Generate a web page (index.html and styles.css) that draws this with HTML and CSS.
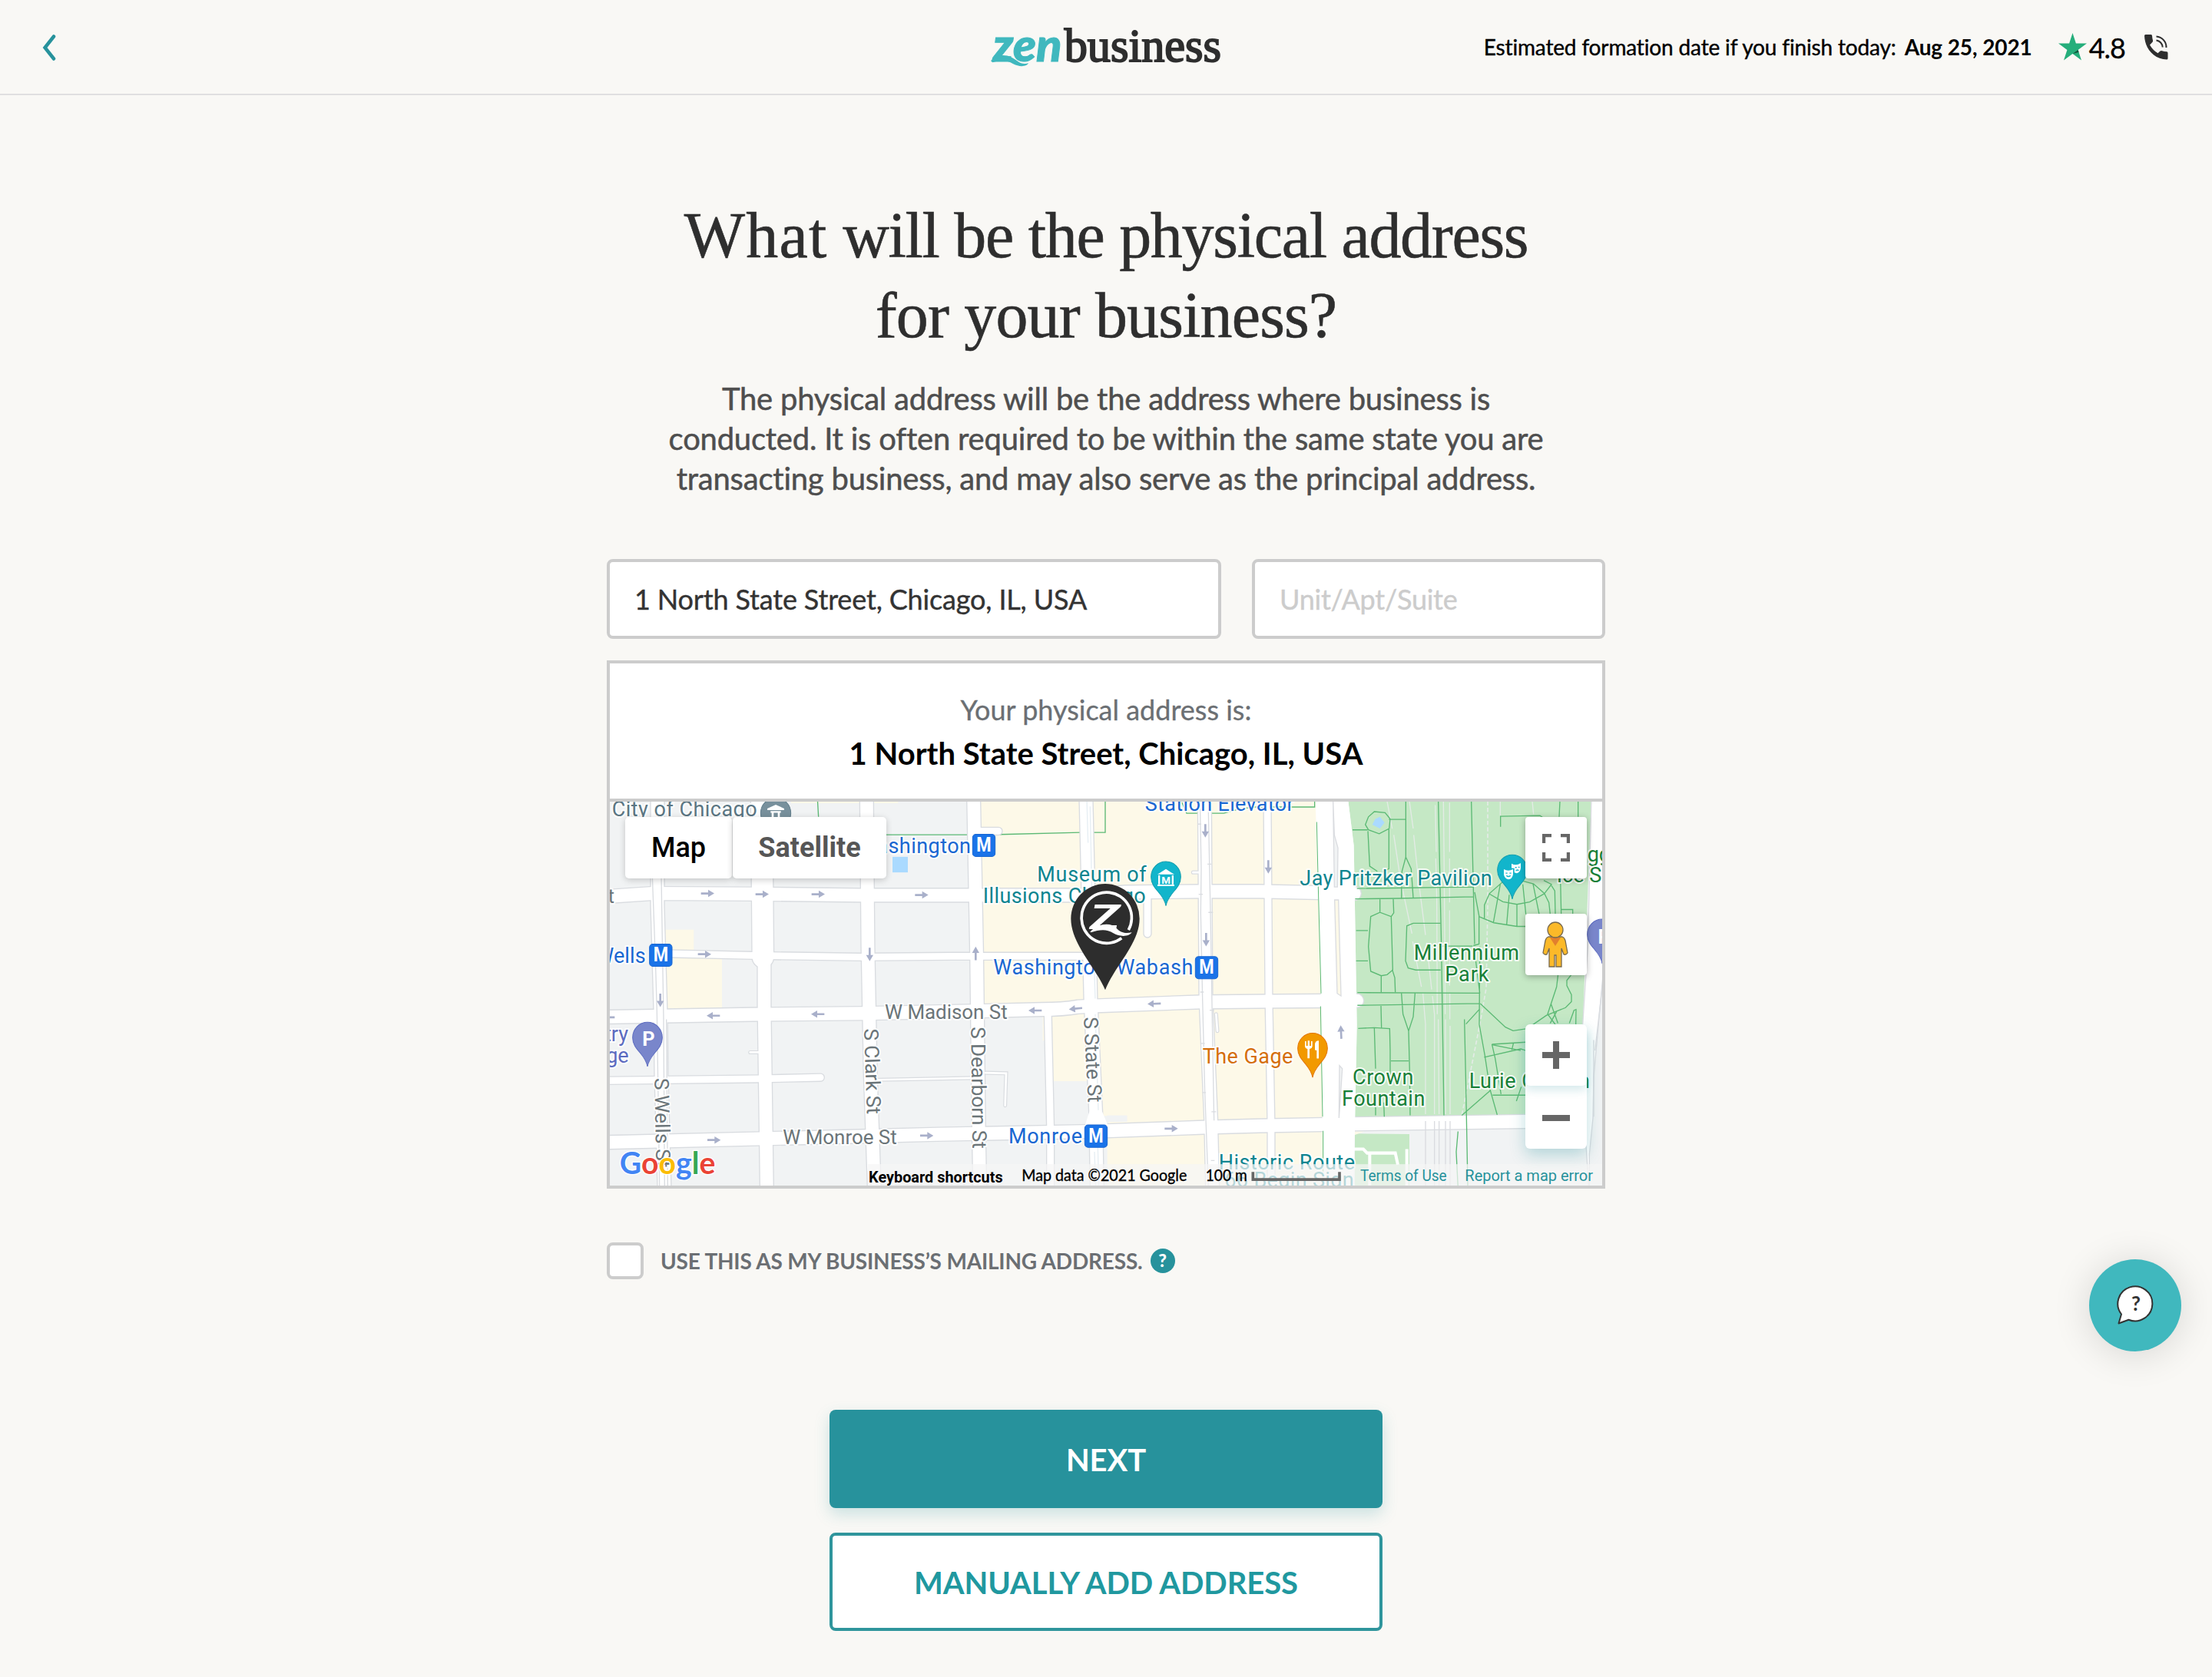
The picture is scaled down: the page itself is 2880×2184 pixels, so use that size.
FILE: index.html
```html
<!DOCTYPE html>
<html lang="en">
<head>
<meta charset="utf-8">
<title>ZenBusiness – Physical address</title>
<link rel="stylesheet" href="styles.css">
</head>
<body>
<header class="topbar">
  <a class="back" aria-label="Back"><svg width="18" height="36" viewBox="0 0 18 36"><path d="M15 3.500L3.500 18L15 32.500" fill="none" stroke="#27929c" stroke-width="4.500" stroke-linecap="round"/></svg></a>
  <svg class="logo" width="340" height="82" viewBox="0 0 1020 246">
    <text class="logo-zen" x="68" y="180" textLength="270" lengthAdjust="spacingAndGlyphs">zen</text>
    <path d="M60 178C95 140 140 158 163 178C180 192 196 190 207 187C202 200 172 203 148 190C118 172 95 176 68 184Z" fill="#40b8be"/>
    <text class="logo-biz" x="347" y="180" textLength="613" lengthAdjust="spacingAndGlyphs">business</text>
  </svg>
  <div class="meta">
    <span class="eta">Estimated formation date if you finish today:</span>
    <b class="date">Aug 25, 2021</b>
    <svg class="star" width="37" height="36" viewBox="0 0 37 36"><path d="M18.500 0L22.900 13.500H37L25.600 21.900L30 35.500L18.500 27.100L7 35.500L11.400 21.900L0 13.500H14.100Z" fill="#25ae7b"/><path d="M26.600 25L18.500 27.100L25.600 21.900Z" fill="#12543c"/></svg>
    <span class="score">4.8</span>
    <svg class="phone" width="31" height="33" viewBox="0 0 31 33"><path d="M1.500 0H8.500Q10 0 10 1.500Q10.200 5 11 7.500Q11.300 9 10.300 10L7 13.500Q11 20.500 17.500 24.300L20.500 21.600Q21.500 20.800 23 21.200Q26 22 29 22.200Q30.500 22.400 30.500 24V31Q30.500 32.500 29 32.500C12 32 .5 18 0 1.500Q0 0 1.500 0Z" fill="#2e2e2e"/><path d="M15.500 2.500A14 14 0 0 1 28.500 17M15.500 7.500A9.500 9.500 0 0 1 23.700 16.500" fill="none" stroke="#2e2e2e" stroke-width="2"/></svg>
  </div>
</header>

<main class="page">
  <h1><span class="h1-first"><span class="h1-open">What</span> will be the physical address</span><br>for your business?</h1>
  <p class="lead">The physical address will be the address where business is<br>conducted. It is often required to be within the same state you are<br>transacting business, and may also serve as the principal address.</p>

  <div class="fields">
    <div class="field field-street"><span>1 North State Street, Chicago, IL, USA</span></div>
    <div class="field field-unit"><span>Unit/Apt/Suite</span></div>
  </div>

  <section class="card">
    <div class="card-head">
      <div class="card-label">Your physical address is:</div>
      <div class="card-address"><span>1 North State Street, Chicago, IL, USA</span></div>
    </div>
    <div class="map">
      <svg class="map-canvas" viewBox="42 41.400 3876 1479" preserveAspectRatio="none">
        <defs>
          <path id="w84" d="M635 30L640 640"/>
          <path id="w54" d="M645 640V830L655 1530M1045 30L1050 600L1060 1100L1075 1530M1463 30L1475 640L1483 1300L1487 1530M1902 30L1920 800L1940 1240L1945 1530M2365 30L2370 800L2390 1270L2396 1530M228 30V440L240 850L243 1100L255 1530"/>
          <path id="w50" d="M30 407L210 395L600 397L1020 402L1380 402H1900L2055 390L2350 387H2580L2950 395M30 871L600 861L1030 857L1470 848L1730 842Q1810 842 1870 832L1940 828L2350 813L2640 810L2960 808M30 1354L1050 1330L1320 1323L1920 1312L2360 1296L2580 1290L2950 1283L3860 1270"/>
          <path id="w30" d="M235 626L600 634L1025 640L1380 637L1910 637M30 1116L625 1109L865 1104M1753 865L1763 1300L1763 1530M2142 400V550M2610 30L2616 800L2625 1290V1530M1470 155H1560"/>
          <path id="w8" d="M1090 1113L1460 1106M1510 1086L1590 1088L1586 1212M590 1007H640M2410 860L2415 925M2320 314H2350"/>
          <g id="mbox"><rect width="88" height="86" rx="13" fill="#1a73e8" stroke="#1967d2" stroke-width="3"/><text x="44" y="67" class="mglyph" textLength="58" lengthAdjust="spacingAndGlyphs">M</text></g>
          <path id="pin" d="M0 112C-8 62-58 48-58 0A58 59 0 0 1 58 0C58 48 8 62 0 112Z"/>
          <path id="arr" d="M-26-4H2V-14L26 0L2 14V4H-26Z" fill="#a9b0ca"/>
        </defs>
        <rect x="30" y="30" width="3900" height="1500" fill="#f1f3f4"/>
        <g fill="#fdf9e8">
          <path d="M258 535H370V640H480V838H265ZM750 30H1168V47H750Z"/>
          <path d="M1465 30H2890V1530H1985V1310L1990 1275H2062V1252H1960V1118H1770V960L1733 962V870H1500Z"/>
        </g>
        <path d="M1985 1250H2062V1275H1985Z" fill="#f1f3f4"/>
        <path d="M2925 30H3876L3842 900V1248L2952 1256L2960 900L2948 210Z" fill="#c5e8c5"/>
        <path d="M2952 1320L3165 1322V1530H2952Z" fill="#c5e8c5"/>
        <path d="M2952 1312H2990L2952 1325Z" fill="#fdf9e8"/>
        <rect x="1146" y="254" width="60" height="60" fill="#aadaff"/>
        <g class="green-line">
          <path d="M853 30L857 100M1110 169H1440M1565 168L1880 160M1930 160H1977V30M2270 30L2295 86H2440L2500 70L2560 62H2795V30"/>
        </g>
        <g class="casing">
          <use href="#w84" stroke-width="90"/><use href="#w54" stroke-width="58"/><use href="#w50" stroke-width="58"/><use href="#w30" stroke-width="34"/><use href="#w8" stroke-width="15"/>
        </g>
        <g class="road">
          <use href="#w84" stroke-width="82"/><use href="#w54" stroke-width="50"/><use href="#w50" stroke-width="50"/><use href="#w30" stroke-width="26"/><use href="#w8" stroke-width="8"/>
        </g>
        <path d="M1898 1290L1915 1235H1965L1988 1290Z" fill="#fff"/>
        <path d="M2798 30H2925L2948 210L2960 900L2952 1310L2946 1530H2828L2820 800L2808 400Z" fill="#fff"/>
        <path d="M2867 40L2872 170L2886 220L2884 370H2872ZM2892 1058L2903 1070L2890 1260Z" fill="#f1f3f4" stroke="#dadce0" stroke-width="4"/>
        <path d="M2873 420H2888L2898 790L2883 780Z" fill="#fdf9e8" stroke="#dadce0" stroke-width="4"/>
        <path d="M3876 30L3862 600L3842 900L3850 1290L3866 1530H3930V30Z" fill="#fff" stroke="#dadce0" stroke-width="4"/>
        <path d="M3922 700L3898 960L3885 1100L3882 1260L3868 1400V1530H3930Z" fill="#f1f3f4" stroke="#dadce0" stroke-width="4"/>
        <path d="M3885 960V1255M3925 700L3890 1000" class="rail"/>
        <g class="rail">
          <path d="M208 330L220 650L226 850L230 1120L236 1530M243 330L248 640L252 880L256 1530M263 880L268 1530"/>
          <path d="M1905 30L1910 200M1918 60L1925 400L1938 800M1938 860L1950 1230M1935 1390L1940 1530M1948 1370L1952 1530" stroke="#e6eef3"/>
          <path d="M2347 30L2352 300L2350 470L2357 800L2366 1160L2380 1530M2379 30L2384 280L2388 470L2395 880L2402 1270"/>
          <path d="M2340 128H2352M2376 282H2392M2342 398H2358M2380 468H2398M2348 775H2362M2385 845H2402M2350 973H2366M2356 1162H2370M2392 1236H2410M2390 1424H2404"/>
        </g>
        <g class="rail park-rail">
          <path d="M3078 40L3098 145M3104 170L3130 340L3175 550M3178 580L3212 755M3218 780L3228 900V1245M3165 40L3180 145M3182 170L3200 340L3228 555M3232 585L3252 765M3255 790L3263 860V1245M3266 55L3270 235M3268 260L3272 420L3274 860M3278 880L3281 1245M3298 40L3302 420L3305 860M3306 880V1245M3322 45V235M3322 260V430M3322 460V750M3323 780V880M3324 905V1245M3520 40V95M3645 40L3650 90"/>
          <path d="M3228 1272V1530M3263 1272V1530M3281 1272V1530M3306 1272V1530M3324 1272V1530" stroke="#dadce0"/>
          <path d="M3471 40V440L3465 760L3440 900L3390 1150L3370 1248" stroke-dasharray="16 9" stroke-width="5"/>
        </g>
        <g class="green-line">
          <path d="M2803 120L2810 410L2820 780M2818 830L2826 1255M2828 1310V1530" stroke-width="3"/>
          <path d="M2993 130L3005 100L3028 80L3070 84L3090 108L3086 145L3047 165L3005 150ZM3085 110H3150M2943 150H3002M3003 155L3010 290L3040 310M3085 148V300L3060 312M3151 40V255L3136 310L3134 415M3151 255L3172 300L3180 412"/>
          <path d="M3278 40L3290 600L3300 1250M3407 40L3420 590M3420 390L3437 480V590L3415 596M2953 416L3120 414L3415 408M2960 376L3415 370M3050 418V466M3102 416L3104 470L3094 484M3014 484L3050 468L3094 484L3100 690L3078 708L3055 712L3014 695L3005 600ZM2957 538H3003M2957 655H3003M3055 712V776M3098 688L3108 720L3110 776"/>
          <path d="M3287 510H3180L3155 520L3150 655L3160 682L3190 690H3287M3290 598H3412M2962 777L3440 779M2962 826L3440 819M3134 780L3140 860L3162 925L3180 870L3187 780M3162 925L3166 1080L3168 1250M3054 828L3056 912M2965 915L3028 912L3088 916L3090 1000V1100M3028 912L3033 1070M3033 1170V1250M3065 1200L3067 1255M3093 1040H3162M3440 600L3438 900L3460 1020L3480 1150L3508 1248M3420 620L3440 780M3442 819L3540 910L3570 924L3625 916L3700 865L3775 835L3798 812V785L3780 750V730L3800 705M3746 705L3740 755L3705 860L3735 900M3718 820L3745 895M3740 850L3715 895M3790 895L3808 845L3816 842L3815 900"/>
          <path d="M3380 880L3385 1100L3393 1520M3386 898L3438 842M3370 1250L3480 1155M3457 1026L3600 994L3620 1000M3600 1000L3488 978L3500 1030L3523 1168M3488 976L3620 968M3572 970L3565 998M3490 1172H3620M3583 1195L3602 1140M3355 1312L3348 1390L3355 1530M3521 138V98L3675 95L3690 105M3753 40L3750 100M3824 40V100"/>
          <path d="M3458 490V440L3478 395L3530 350L3600 345L3650 358L3692 395L3710 430L3715 475M3438 485L3495 508L3585 522H3625M3478 397L3530 427L3585 437L3635 428L3692 396M3520 360L3493 508M3555 400L3545 515M3585 437V520M3608 360L3620 475M3648 358L3672 475M3692 396L3720 360L3690 345M3720 365L3733 385L3735 475M3755 340L3758 475M3758 457H3803V475"/>
        </g>
        <path d="M3020 130L3032 108L3050 100L3068 122L3050 145Z" fill="#aadaff"/>
        <path d="M2946 1380H2985L3000 1395H3110L3120 1440M3010 1395V1530M3155 1380V1530" fill="none" stroke="#fff" stroke-width="12"/>

        <g>
          <use href="#arr" x="424" y="395"/><use href="#arr" x="637" y="398"/><use href="#arr" x="856" y="398"/><use href="#arr" x="1260" y="401"/><use href="#arr" x="412" y="629"/><use href="#arr" x="449" y="1345"/><use href="#arr" x="1280" y="1328"/><use href="#arr" x="2235" y="1301"/>
          <use href="#arr" transform="translate(446 866) rotate(180)"/><use href="#arr" transform="translate(854 860) rotate(180)"/><use href="#arr" transform="translate(35 872) rotate(180)"/><use href="#arr" transform="translate(1703 846) rotate(180)"/><use href="#arr" transform="translate(1861 839) rotate(174)"/><use href="#arr" transform="translate(2168 820) rotate(178)"/>
          <use href="#arr" transform="translate(1057 630) rotate(90)"/><use href="#arr" transform="translate(239 807) rotate(90)"/><use href="#arr" transform="translate(2368 154) rotate(90)"/><use href="#arr" transform="translate(2371 573) rotate(90)"/><use href="#arr" transform="translate(2614 293) rotate(90)"/><use href="#arr" transform="translate(1471 626) rotate(-90)"/><use href="#arr" transform="translate(2898 929) rotate(-93)"/>
        </g>

        <g class="label street">
          <text x="718" y="1360" textLength="445">W Monroe St</text>
          <text x="1116" y="878" textLength="479">W Madison St</text>
          <text x="60" y="432" text-anchor="end">St</text>
          <text transform="translate(1035 916) rotate(88)" textLength="330">S Clark St</text>
          <text transform="translate(217 1106) rotate(89)" textLength="345">S Wells St</text>
          <text transform="translate(1453 909) rotate(89.300)" textLength="469">S Dearborn St</text>
          <text transform="translate(1893 872) rotate(87)" textLength="330">S State St</text>
        </g>
        <g class="label">
          <text x="50" y="97" textLength="567" fill="#5b7683">City of Chicago</text>
          <g fill="#1967d2">
            <text x="1452" y="240" text-anchor="end" textLength="440">Washington</text>
            <text x="182" y="662" text-anchor="end" textLength="196">Wells</text>
            <text x="1540" y="708" textLength="780">Washington/Wabash</text>
            <text x="2132" y="77" textLength="582">Station Elevator</text>
            <text x="1599" y="1357" textLength="288">Monroe</text>
          </g>
          <g fill="#5c6bc0"><text x="114" y="965" text-anchor="end">try</text><text x="116" y="1047" text-anchor="end">ge</text></g>
          <g fill="#0e8590">
            <text x="1711" y="348" textLength="427">Museum of</text>
            <text x="1499" y="431" textLength="636">Illusions Chicago</text>
            <text x="2420" y="1457" textLength="532">Historic Route</text>
            <text x="2443" y="1525" textLength="505">66 Begin Sign</text>
            <text x="2737" y="363" textLength="751">Jay Pritzker Pavilion</text>
          </g>
          <text x="2357" y="1050" textLength="353" fill="#d56e0c">The Gage</text>
          <g fill="#188038">
            <text x="3182" y="650" textLength="412">Millennium</text>
            <text x="3304" y="733" textLength="171">Park</text>
            <text x="2943" y="1130" textLength="238">Crown</text>
            <text x="2901" y="1213" textLength="325">Fountain</text>
            <text x="3398" y="1145" textLength="472">Lurie Garden</text>
            <text x="3860" y="272">gg</text>
            <text x="3740" y="353">Ice Sk</text>
          </g>
        </g>
        <use href="#mbox" x="197" y="590"/><use href="#mbox" x="1459" y="167"/><use href="#mbox" x="2329" y="638"/><use href="#mbox" x="1897" y="1287"/>
        <circle cx="690" cy="86" r="59" fill="#78909c" stroke="#607d8b" stroke-width="3"/>
        <path d="M657 68L690 53L723 68V74H657ZM670 78H710V84H670ZM674 84H682V108H674ZM698 84H706V108H698Z" fill="#fff"/>
        <use href="#pin" x="189" y="950" fill="#7986cb" stroke="#5c6bc0" stroke-width="3"/>
        <text x="193" y="983" class="mglyph">P</text>
        <use href="#pin" x="3918" y="553" fill="#7986cb" stroke="#5c6bc0" stroke-width="3"/>
        <text x="3926" y="588" class="mglyph">P</text>
        <use href="#pin" x="2214" y="331" fill="#12b5cb" stroke="#129eaf" stroke-width="3"/>
        <path d="M2181 322L2214 301L2247 322ZM2184 325H2191V360H2184ZM2237 325H2244V360H2237ZM2181 361H2247V367H2181Z" fill="#fff"/>
        <text x="2214" y="357" class="mglyph tiny">M</text>
        <use href="#pin" x="3567" y="305" fill="#12b5cb" stroke="#129eaf" stroke-width="3"/>
        <path d="M3534 302Q3551 312 3570 302V322Q3567 340 3552 341Q3536 338 3534 322ZM3564 280Q3582 290 3600 278V297Q3598 314 3584 317L3575 314V298L3564 297Z" fill="#fff"/>
        <path d="M3541 317H3548M3556 317H3563M3544 326Q3552 334 3560 326M3578 295H3584M3590 294H3596M3581 308Q3586 302 3592 307" fill="none" stroke="#12b5cb" stroke-width="4"/>
        <use href="#pin" x="2787" y="992" fill="#f29900" stroke="#e37400" stroke-width="3"/>
        <path d="M2757 964V983Q2757 992 2767 994V1030H2775V994Q2786 992 2786 983V964H2781V982H2775V962H2768V982H2762V964ZM2796 998V975Q2798 962 2811 962V1031H2803V1000Z" fill="#fff"/>

        <path d="M1977 767C1940 680 1843 590 1843 492A134 134 0 0 1 2111 492C2111 590 2010 680 1977 767Z" fill="#2d2d2d"/>
        <path d="M2068 536A98 98 0 1 0 2041 567" fill="none" stroke="#fff" stroke-width="11"/>
        <text x="1918" y="532" class="zmark" textLength="116" lengthAdjust="spacingAndGlyphs">Z</text>
        <path d="M1918 543C1950 510 1998 505 2022 530C2040 549 2060 549 2081 545C2070 562 2035 563 2010 549C1980 530 1955 535 1922 545Z" fill="#fff"/>

        <g class="google">
          <text x="80" y="1475" textLength="374" lengthAdjust="spacingAndGlyphs"><tspan fill="#4285f4">G</tspan><tspan fill="#ea4335">o</tspan><tspan fill="#fbbc04">o</tspan><tspan fill="#4285f4">g</tspan><tspan fill="#34a853">l</tspan><tspan fill="#ea4335">e</tspan></text>
        </g>
        <rect x="1050" y="1438" width="2880" height="90" fill="#f5f5f5" fill-opacity=".72"/>
        <g class="legal">
          <text x="1053" y="1508" class="kbd" textLength="524" lengthAdjust="spacingAndGlyphs">Keyboard shortcuts</text>
          <text x="1651" y="1503" class="lato" textLength="645" lengthAdjust="spacingAndGlyphs">Map data ©2021 Google</text>
          <text x="2369" y="1503" class="lato" textLength="162" lengthAdjust="spacingAndGlyphs">100 m</text>
          <path d="M2554 1468V1497H2892V1468" fill="none" stroke="#666" stroke-width="11"/>
          <text x="2973" y="1503" class="link" textLength="338" lengthAdjust="spacingAndGlyphs">Terms of Use</text>
          <text x="3382" y="1503" class="link" textLength="500" lengthAdjust="spacingAndGlyphs">Report a map error</text>
        </g>
      </svg>
      <div class="map-types"><span class="type type-on">Map</span><span class="type type-sat">Satellite</span></div>
      <span class="ctl ctl-full"><svg width="36" height="36" viewBox="0 0 36 36"><path d="M2 12V2H12M24 2H34V12M34 24V34H24M12 34H2V24" fill="none" stroke="#666" stroke-width="4.400"/></svg></span>
      <span class="ctl ctl-peg"><svg width="34" height="60" viewBox="0 0 34 60"><path d="M8 20H26Q29 21 30 25L33 41Q31 44 28 43L25 35V59H18V44H16V59H9V35L6 43Q3 44 1 41L4 25Q5 21 8 20Z" fill="#fbb929" stroke="#77694f" stroke-width="1.300"/><path d="M10 21H24L17 32Z" fill="#e27f2d"/><circle cx="17" cy="11" r="10" fill="#fbb929" stroke="#77694f" stroke-width="1.300"/></svg></span>
      <div class="zoomer">
        <span class="zoom-btn zoom-in"><svg width="36" height="36" viewBox="0 0 36 36"><path d="M14 0H22V14H36V22H22V36H14V22H0V14H14Z" fill="#666"/></svg></span>
        <span class="zoom-btn zoom-out"><svg width="36" height="8" viewBox="0 0 36 8"><path d="M0 0H36V8H0Z" fill="#666"/></svg></span>
      </div>
    </div>
  </section>

  <div class="mailing">
    <span class="checkbox"></span>
    <span class="mailing-text">USE THIS AS MY BUSINESS’S MAILING ADDRESS.</span>
    <span class="help">?</span>
  </div>

  <div class="actions">
    <a class="btn btn-primary">NEXT</a>
    <a class="btn btn-outline">MANUALLY ADD ADDRESS</a>
  </div>
</main>

<div class="chat"><svg width="50" height="52" viewBox="0 0 50 52"><path d="M2.500 49.500L6 37.500A22.500 22.500 0 1 1 15.500 44.700Z" fill="#fff" stroke="#333" stroke-width="2" stroke-linejoin="round"/><text x="25" y="33" text-anchor="middle">?</text></svg></div>
</body>
</html>
```
FILE: styles.css
```css
* { box-sizing: border-box; }
body { margin: 0; width: 2880px; height: 2184px; overflow: hidden; background: #f9f8f5; font-family: Lato, "Liberation Sans", sans-serif; color: #2e2e2e; position: relative; }
svg { display: block; }

.topbar { height: 124px; border-bottom: 2px solid #e0dfe0; display: grid; grid-template-columns: 1fr 340px 1fr; align-items: center; padding: 0 57px 0 55px; }
.back { justify-self: start; padding-top: 2px; }
.logo-zen { font: italic 900 178px Lato, sans-serif; fill: #40b8be; stroke: #40b8be; stroke-width: 3px; }
.logo-biz { font: 183px "Liberation Serif", serif; fill: #2e2e2e; stroke: #2e2e2e; stroke-width: 6px; }
.logo { margin-left: 1px; }
.meta { justify-self: end; display: flex; align-items: center; color: #000; font-size: 28px; white-space: nowrap; }
.eta { letter-spacing: -.15px; -webkit-text-stroke: .4px; }
.date { margin-left: 11px; letter-spacing: -.1px; }
.star { margin-left: 34px; }
.score { margin-left: 3px; font-size: 36px; letter-spacing: -1px; padding-top: 1px; -webkit-text-stroke: .3px; }
.phone { margin-left: 25px; }

.page { width: 1300px; margin: 0 auto; padding-top: 131px; }
h1 { margin: 0; font: 400 84px/104px "Liberation Serif", serif; letter-spacing: -.85px; text-align: center; white-space: nowrap; -webkit-text-stroke: .6px; }
.h1-first { letter-spacing: -1.300px; }
.h1-open { letter-spacing: 1.200px; }
.lead { margin: 30px 0 0; font-size: 40px; line-height: 52px; letter-spacing: -.22px; color: #4e4e4e; text-align: center; white-space: nowrap; -webkit-text-stroke: .5px; }

.fields { margin-top: 79px; display: flex; gap: 40px; }
.field { height: 104px; border: 4px solid #ccc; border-radius: 8px; background: #fff; padding: 0 32px; display: flex; align-items: center; font-size: 36px; letter-spacing: -.16px; color: #333; white-space: nowrap; -webkit-text-stroke: .4px; }
.field-street { width: 800px; }
.field-unit { width: 460px; color: #ccc; letter-spacing: -.25px; }

.card { margin-top: 28px; border: 4px solid #ccc; background: #fff; }
.card-head { height: 176px; padding-top: 33px; text-align: center; white-space: nowrap; }
.card-label { font-size: 36px; line-height: 54px; color: #6b6f73; -webkit-text-stroke: .3px; }
.card-address { font-size: 40px; line-height: 60px; font-weight: 700; color: #000; }

.map { position: relative; height: 504px; border-top: 4px solid #ccc; overflow: hidden; }
.map-canvas { width: 1292px; height: 500px; }
.casing, .road, .rail, .green-line { fill: none; }
.casing { stroke: #d9dce0; stroke-linecap: round; }
.road { stroke: #fff; stroke-linecap: round; }
.rail { stroke: #d9dce0; stroke-width: 4px; }
.park-rail { stroke: #e4ebe6; }
.green-line { stroke: #5bb974; stroke-width: 4px; }
.label text { font-family: Roboto, sans-serif; font-size: 81px; stroke: #fff; stroke-opacity: .85; stroke-width: 12px; stroke-linejoin: round; paint-order: stroke; }
.street text { font-size: 78px; fill: #6b7579; }
.mglyph { font: 700 76px Roboto, sans-serif; fill: #fff; text-anchor: middle; }
.tiny { font-size: 40px; }
.zmark { font: italic 900 130px Lato, sans-serif; fill: #fff; }
.google text { font: 700 116px Lato, sans-serif; stroke: #fff; stroke-width: 8px; paint-order: stroke; }
.legal text { font-size: 60px; fill: #000; }
.legal .kbd { font-family: Roboto, sans-serif; font-weight: 700; font-size: 58px; }
.legal .lato { font-family: Lato, sans-serif; stroke: #000; stroke-width: 1px; }
.legal .link { font-family: Roboto, sans-serif; fill: #27929c; }

.map-types { position: absolute; left: 20px; top: 20px; display: flex; gap: 1px; font: 700 36px Roboto, sans-serif; }
.type { height: 80px; display: flex; align-items: center; justify-content: center; background: #fff; border-radius: 5px; box-shadow: 0 2px 8px rgba(0, 0, 0, .2); }
.type-on { width: 139px; color: #000; font-weight: 500; }
.type-sat { width: 200px; color: #565656; }
.ctl { position: absolute; right: 20px; width: 80px; height: 80px; background: #fff; border-radius: 4px; box-shadow: 0 2px 8px rgba(0, 0, 0, .3); display: flex; align-items: center; justify-content: center; }
.ctl-full { top: 20px; }
.ctl-peg { top: 146px; }
.ctl-peg svg { margin-right: 3px; }
.zoomer { position: absolute; right: 20px; top: 290px; width: 80px; height: 162px; background: #fff; border-radius: 6px; box-shadow: 0 8px 20px rgba(39, 146, 156, .3); }
.zoom-btn { height: 80px; display: flex; align-items: center; justify-content: center; }
.zoom-in { border-radius: 6px; box-shadow: 0 6px 12px rgba(39, 146, 156, .18); }
.zoom-out { height: 83px; }

.mailing { margin-top: 70px; height: 48px; display: flex; align-items: center; white-space: nowrap; }
.checkbox { width: 48px; height: 48px; border: 4px solid #ccc; border-radius: 8px; background: #fff; }
.mailing-text { margin-left: 22px; font-size: 28px; font-weight: 700; letter-spacing: -.2px; color: #6b6f73; }
.help { margin-left: 10px; width: 32px; height: 32px; border-radius: 50%; background: #27929c; color: #fff; font-size: 23px; font-weight: 900; line-height: 31px; text-align: center; }

.actions { width: 720px; margin: 170px auto 0; display: flex; flex-direction: column; gap: 32px; }
.btn { height: 128px; padding-top: 2px; border-radius: 8px; display: flex; align-items: center; justify-content: center; font-size: 40px; font-weight: 700; letter-spacing: -.1px; white-space: nowrap; }
.btn-primary { background: #27929c; color: #fff; box-shadow: 0 8px 20px rgba(39, 146, 156, .22); }
.btn-outline { background: #fff; border: 4px solid #2f959c; color: #20989f; }

.chat { position: absolute; left: 2720px; top: 1640px; width: 120px; height: 120px; border-radius: 50%; background: #40b8be; box-shadow: 0 4px 50px rgba(0, 0, 0, .14); display: flex; align-items: center; justify-content: center; padding-left: 2px; }
.chat text { font: 700 26px Lato, sans-serif; fill: #333; }
```
